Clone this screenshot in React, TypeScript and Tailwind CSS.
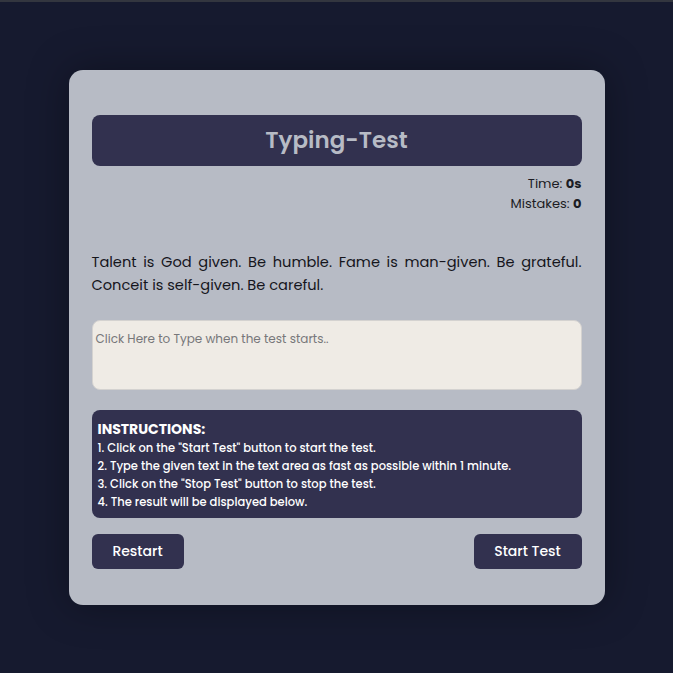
export default function App() {
    return (
        <div className="min-h-screen bg-[#161a2f] font-['Poppins','Open_Sans',sans-serif]">
            <div className="h-[2px] bg-[#33363f]" />
            <div className="flex min-h-[671px] items-center justify-center">
                <div className="w-[536px] rounded-[14px] bg-[#b7bbc5] px-[23px] pt-[45px] pb-[36px] shadow-[0_0_40px_rgba(0,0,0,0.35)]">
                    {/* Header */}
                    <div className="flex h-[51px] items-center justify-center rounded-lg bg-[#32314f]">
                        <h1 className="text-[23px] font-semibold text-[#b7bbc5]">Typing-Test</h1>
                    </div>

                    {/* Stats */}
                    <div className="mt-[8px] text-right text-[13px] leading-[20px] text-[#1c1c24]">
                        <p>Time: <b>0s</b></p>
                        <p>Mistakes: <b>0</b></p>
                    </div>

                    {/* Quote */}
                    <p className="mt-[37px] text-justify text-[14.6px] leading-[23px] text-[#15151c]">
                        Talent is God given. Be humble. Fame is man-given. Be grateful. Conceit is self-given. Be careful.
                    </p>

                    {/* Input */}
                    <textarea
                        placeholder="Click Here to Type when the test starts.."
                        className="mt-[23px] block h-[70px] w-full resize-none rounded-lg border border-[#d4d2d0] bg-[#efebe5] px-[3px] pt-[9px] pb-[7px] text-[12px] outline-none placeholder:text-[#77777a]"
                    />

                    {/* Instructions */}
                    <div className="mt-[20px] rounded-lg bg-[#32314f] px-[6px] pt-[9px] pb-[7px] text-[11.5px] font-medium leading-[18px] text-white">
                        <p className="text-[14px] font-bold leading-[20px]">INSTRUCTIONS:</p>
                        <p>1. Click on the "Start Test" button to start the test.</p>
                        <p>2. Type the given text in the text area as fast as possible within 1 minute.</p>
                        <p>3. Click on the "Stop Test" button to stop the test.</p>
                        <p>4. The result will be displayed below.</p>
                    </div>

                    {/* Buttons */}
                    <div className="mt-[16px] flex justify-between">
                        <button className="h-[35px] w-[92px] rounded-md bg-[#32314f] text-[14px] font-medium text-white">Restart</button>
                        <button className="h-[35px] w-[108px] rounded-md bg-[#32314f] text-[14px] font-medium text-white">Start Test</button>
                    </div>
                </div>
            </div>
        </div>
    );
}
